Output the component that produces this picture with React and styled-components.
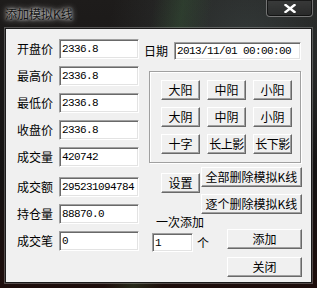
import React from "react";
import styled, { createGlobalStyle } from "styled-components";

const Global = createGlobalStyle`
  html, body { margin: 0; padding: 0; background: #0c0c0c; }
  #root { width: 317px; height: 288px; overflow: hidden; }
`;

const cjk = `"Noto Sans CJK SC", "Liberation Sans", sans-serif`;
const mono = `"Liberation Mono", "DejaVu Sans Mono", monospace`;

const Window = styled.div`
  width: 317px;
  height: 288px;
  box-sizing: border-box;
  display: flex;
  flex-direction: column;
  padding: 0 5px 5px 5px;
  background:
    linear-gradient(100deg, transparent 42%, rgba(60, 110, 60, 0.28) 50%, transparent 58%),
    radial-gradient(ellipse at 78% 15%, rgba(120, 150, 150, 0.25), transparent 40%),
    linear-gradient(180deg, #1e1c1b 0%, #141212 60%, #1d0d0b 100%);
  font-family: ${cjk};
`;

const TitleBar = styled.div`
  height: 28px;
  display: flex;
  align-items: flex-start;
  justify-content: space-between;
`;

const Title = styled.div`
  margin-top: 7px;
  font-size: 12px;
  line-height: 14px;
  color: #111;
  text-shadow: 0 0 6px rgba(255, 255, 255, 0.9), 0 0 3px rgba(255, 255, 255, 0.8);
  letter-spacing: 0;
`;

const CloseBtn = styled.div`
  width: 47px;
  height: 18px;
  margin-top: -1px;
  margin-right: -1px;
  box-sizing: border-box;
  border: 1px solid rgba(150, 150, 150, 0.65);
  border-radius: 0 0 4px 4px;
  box-shadow: inset 0 0 0 1px rgba(0, 0, 0, 0.55);
  background: linear-gradient(180deg, rgba(70, 70, 70, 0.55), rgba(40, 40, 40, 0.55));
  display: flex;
  align-items: center;
  justify-content: center;
`;

const Client = styled.div`
  flex: 1;
  box-sizing: border-box;
  border: 1px solid #1a1a1a;
  box-shadow: 0 0 0 1px rgba(190, 190, 190, 0.35);
  background: #f0f0f0;
  display: flex;
  align-items: flex-start;
  padding: 10px 0 0 11px;
`;

const LeftCol = styled.div`
  width: 122px;
  display: flex;
  flex-direction: column;
  gap: 7px;
`;

const Row = styled.div`
  display: flex;
  align-items: center;
  height: 20px;
  margin-top: ${(p) => (p.$extra ? "3px" : "0")};
`;

const Label = styled.span`
  width: ${(p) => p.$w || 42}px;
  flex: none;
  font-size: 12px;
  line-height: 14px;
  color: #000;
  white-space: nowrap;
`;

const Field = styled.div`
  width: ${(p) => p.$w}px;
  height: ${(p) => p.$h || 20}px;
  flex: none;
  box-sizing: border-box;
  background: #fff;
  border-style: solid;
  border-width: 1px;
  border-color: #a0a0a0 #ffffff #ffffff #a0a0a0;
  box-shadow: inset 1px 1px 0 #696969, inset -1px -1px 0 #e3e3e3;
  padding: 0 0 0 2px;
  display: flex;
  align-items: center;
  font-family: ${mono};
  font-size: 11px;
  letter-spacing: -0.6px;
  color: #000;
  white-space: nowrap;
  overflow: hidden;
`;

const RightCol = styled.div`
  margin-left: 5px;
  width: 158px;
  display: flex;
  flex-direction: column;
`;

const DateRow = styled.div`
  display: flex;
  align-items: center;
  margin-top: 3px;
  height: 18px;
`;

const Group = styled.div`
  margin: 11px 0 0 5px;
  width: 152px;
  height: 92px;
  box-sizing: border-box;
  border: 1px solid #a0a0a0;
  box-shadow: inset 1px 1px 0 #fff, 1px 1px 0 #fff;
  padding: 8px 0 0 11px;
  display: grid;
  grid-template-columns: repeat(3, 39px);
  grid-auto-rows: 20px;
  column-gap: 7px;
  row-gap: 7px;
  align-content: start;
`;

const Button = styled.div`
  width: ${(p) => p.$w || 39}px;
  height: 20px;
  box-sizing: border-box;
  background: #f0f0f0;
  border-style: solid;
  border-width: 1px;
  border-color: #ffffff #696969 #696969 #ffffff;
  box-shadow: inset -1px -1px 0 #a0a0a0;
  display: flex;
  align-items: center;
  justify-content: center;
  font-size: 12px;
  line-height: 14px;
  color: #000;
  white-space: nowrap;
  overflow: hidden;
  letter-spacing: ${(p) => (p.$tight ? "-0.5px" : "0")};
  padding-bottom: 1px;
`;

const ActionRow = styled.div`
  display: flex;
  align-items: flex-start;
  margin-top: 4px;
`;

const SetButton = styled(Button)`
  margin: 6px 0 0 17px;
`;

const StackCol = styled.div`
  display: flex;
  flex-direction: column;
  gap: ${(p) => p.$gap}px;
  margin-left: ${(p) => p.$ml || 0}px;
  margin-top: ${(p) => p.$mt || 0}px;
`;

const BottomRow = styled.div`
  display: flex;
  align-items: flex-start;
`;

const CountCol = styled.div`
  display: flex;
  flex-direction: column;
  width: 83px;
`;

const CountLabel = styled.span`
  margin: 1px 0 0 12px;
  font-size: 12px;
  line-height: 14px;
  color: #000;
`;

const CountRow = styled.div`
  display: flex;
  align-items: center;
  margin: 4px 0 0 8px;
  gap: 4px;
`;

const Unit = styled.span`
  font-size: 12px;
  line-height: 14px;
  color: #000;
`;

const kButtons = ["大阳", "中阳", "小阳", "大阴", "中阴", "小阴", "十字", "长上影", "长下影"];

const leftRows = [
  ["开盘价", "2336.8"],
  ["最高价", "2336.8"],
  ["最低价", "2336.8"],
  ["收盘价", "2336.8"],
  ["成交量", "420742"],
  ["成交额", "295231094784", true],
  ["持仓量", "88870.0"],
  ["成交笔", "0"],
];

export default function App() {
  return (
    <>
      <Global />
      <Window>
        <TitleBar>
          <Title>添加模拟K线</Title>
          <CloseBtn>
            <svg width="12" height="9" viewBox="0 0 12 9">
              <path d="M1.5 1 L10.5 8 M10.5 1 L1.5 8" stroke="#fff" strokeWidth="2.4" strokeLinecap="square" />
            </svg>
          </CloseBtn>
        </TitleBar>
        <Client>
          <LeftCol>
            {leftRows.map(([l, v, extra]) => (
              <Row key={l} $extra={extra}>
                <Label>{l}</Label>
                <Field $w={80}>{v}</Field>
              </Row>
            ))}
          </LeftCol>
          <RightCol>
            <DateRow>
              <Label $w={30}>日期</Label>
              <Field $w={127} $h={18}>2013/11/01 00:00:00</Field>
            </DateRow>
            <Group>
              {kButtons.map((b) => (
                <Button key={b} $tight={b.length > 2}>{b}</Button>
              ))}
            </Group>
            <ActionRow>
              <SetButton>设置</SetButton>
              <StackCol $gap={7} $ml={1}>
                <Button $w={101}>全部删除模拟K线</Button>
                <Button $w={101}>逐个删除模拟K线</Button>
              </StackCol>
            </ActionRow>
            <BottomRow>
              <CountCol>
                <CountLabel>一次添加</CountLabel>
                <CountRow>
                  <Field $w={41} $h={19}>1</Field>
                  <Unit>个</Unit>
                </CountRow>
              </CountCol>
              <StackCol $gap={8} $mt={15}>
                <Button $w={75}>添加</Button>
                <Button $w={75}>关闭</Button>
              </StackCol>
            </BottomRow>
          </RightCol>
        </Client>
      </Window>
    </>
  );
}
